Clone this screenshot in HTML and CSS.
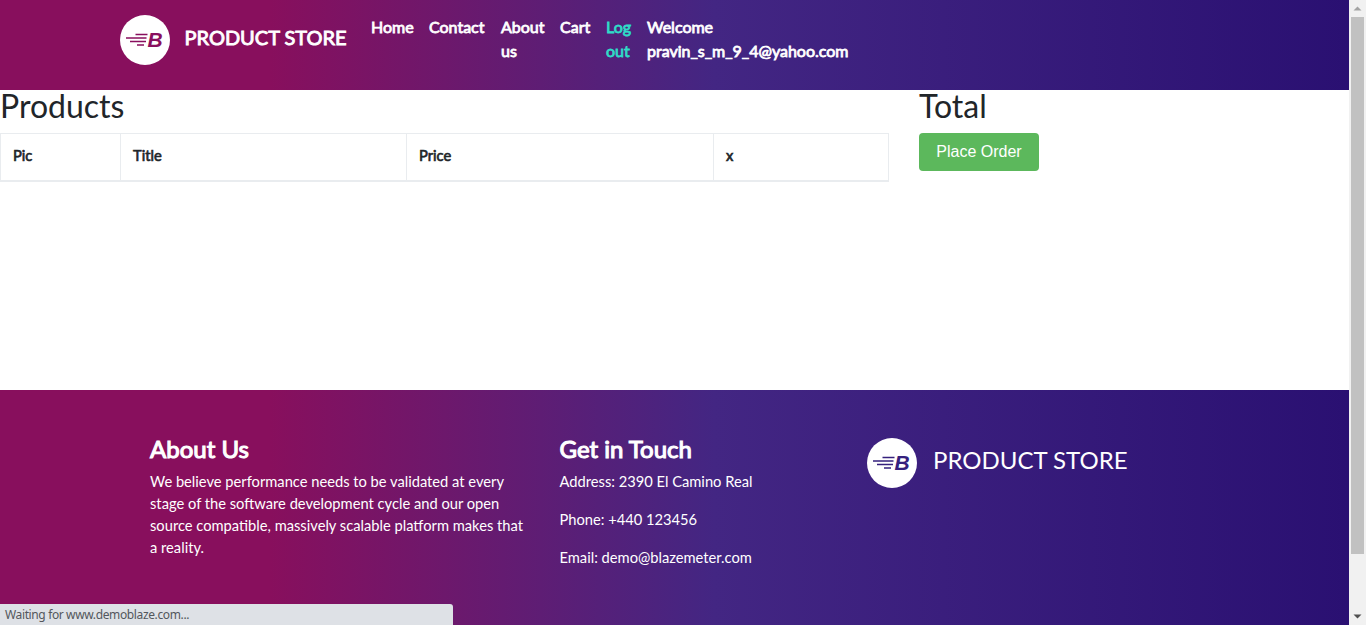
FILE: index.html
```html
<!DOCTYPE html>
<html lang="en">
<head>
<meta charset="utf-8">
<title>STORE</title>
<link rel="stylesheet" href="styles.css">
</head>
<body>
<div class="window">
  <div class="page">
    <header class="navbar">
      <a class="brand">
        <svg class="logo" viewBox="0 0 50 50"><circle cx="25" cy="25" r="25" fill="#fff"/><path class="speed" d="M15.5 19.5H27.5M6 23H26.5M10 26.5H26M17 30H24"/><text class="mark" x="27.5" y="32.3">B</text></svg>
        <span class="brand-name">PRODUCT STORE</span>
      </a>
      <nav class="nav">
        <a class="link home">Home</a>
        <a class="link contact">Contact</a>
        <a class="link about">About<br>us</a>
        <a class="link cart">Cart</a>
        <a class="link logout">Log<br>out</a>
        <a class="link user">Welcome<br>pravin_s_m_9_4@yahoo.com</a>
      </nav>
    </header>
    <main class="content">
      <section class="products">
        <h2>Products</h2>
        <table class="table">
          <thead><tr><th class="pic">Pic</th><th class="title">Title</th><th class="price">Price</th><th>x</th></tr></thead>
        </table>
      </section>
      <section class="total">
        <h2>Total</h2>
        <button class="order">Place Order</button>
      </section>
    </main>
    <footer class="footer">
      <section class="about-us">
        <h4>About Us</h4>
        <p>We believe performance needs to be validated at every<br>stage of the software development cycle and our open<br>source compatible, massively scalable platform makes that<br>a reality.</p>
      </section>
      <section class="touch">
        <h4>Get in Touch</h4>
        <p>Address: 2390 El Camino Real</p>
        <p>Phone: +440 123456</p>
        <p>Email: demo@blazemeter.com</p>
      </section>
      <section class="foot-brand">
        <svg class="logo violet" viewBox="0 0 50 50"><circle cx="25" cy="25" r="25" fill="#fff"/><path class="speed" d="M15.5 19.5H27.5M6 23H26.5M10 26.5H26M17 30H24"/><text class="mark" x="27.5" y="32.3">B</text></svg>
        <span class="foot-name">PRODUCT STORE</span>
      </section>
    </footer>
  </div>
  <div class="scrollbar">
    <svg class="arrow" viewBox="0 0 17 17"><path d="M4.5 10.5h8l-4-4z" fill="#a3a3a3"/></svg>
    <div class="thumb"></div>
    <svg class="arrow" viewBox="0 0 17 17"><path d="M4.5 6.5h8l-4 4z" fill="#505050"/></svg>
  </div>
  <div class="status">Waiting for www.demoblaze.com...</div>
</div>
</body>
</html>
```
FILE: styles.css
```css
* { box-sizing: border-box; }
body { margin: 0; font-family: Lato, sans-serif; background: #fff; color: #212529; }
h2, h4, p { margin: 0; }
.window { position: relative; display: flex; width: 1366px; height: 625px; overflow: hidden; }
.page { width: 1349px; display: flex; flex-direction: column; }
.navbar, .footer { background: linear-gradient(90deg, #880f5d 0%, #880f5d 20%, #432683 53%, #2a1072 100%); color: #fff; }
.navbar { height: 90px; padding: 15px 0 0 120px; display: flex; align-items: flex-start; }
.brand { display: flex; width: 251px; }
.logo { width: 50px; height: 50px; flex: none; color: #890f5e; }
.violet { color: #35207d; }
.speed { stroke: currentColor; stroke-width: 1.7; fill: none; }
.mark { font: italic bold 21px "Liberation Sans", sans-serif; fill: currentColor; }
.brand-name { margin-left: 14.5px; font-size: 20px; line-height: 44px; -webkit-text-stroke: 0.9px currentColor; white-space: nowrap; }
.nav { display: flex; }
.link { font-size: 16px; line-height: 24px; -webkit-text-stroke: 0.8px currentColor; white-space: nowrap; }
.home { width: 58px; }
.contact { width: 72px; }
.about { width: 59px; }
.cart { width: 46px; }
.logout { width: 41px; color: #2fdcc8; }
.content { height: 300px; display: flex; }
.products { width: 919px; }
h2 { font-size: 32px; line-height: 32px; font-weight: 400; margin-bottom: 11px; }
.table { width: 889px; border-collapse: collapse; table-layout: fixed; }
.table th { height: 47px; border: 1px solid #e9ecef; border-bottom-width: 2px; padding: 0 12px 3px; text-align: left; font-size: 14.7px; font-weight: 400; -webkit-text-stroke: 0.65px currentColor; }
.pic { width: 120px; }
.title { width: 286px; }
.price { width: 307px; }
.order { display: block; width: 120px; height: 38px; padding: 0; border: 0; border-radius: 4px; background: #5cb85c; color: #fff; font: 16px "Liberation Sans", sans-serif; }
.footer { height: 235px; padding: 46px 0 0 150px; display: flex; }
h4 { font-size: 24px; line-height: 25px; font-weight: 400; -webkit-text-stroke: 1.1px currentColor; margin-bottom: 9px; }
.footer p { font-size: 14.7px; line-height: 22px; white-space: nowrap; }
.about-us { width: 409.5px; }
.touch { width: 307.5px; }
.touch p { margin-bottom: 16px; }
.foot-brand { display: flex; padding-top: 2px; }
.foot-name { margin-left: 16px; font-size: 24px; line-height: 44px; white-space: nowrap; }
.scrollbar { width: 17px; background: #f1f1f1; display: flex; flex-direction: column; }
.arrow { width: 17px; height: 17px; flex: none; }
.thumb { width: 13px; height: 537px; margin: 0 2px auto; background: #c1c1c1; }
.status { position: absolute; left: 0; bottom: 0; width: 453px; height: 21px; padding-left: 5px; border-radius: 0 3px 0 0; background: #dee1e6; color: #53575c; font: 12px/22px "Noto Sans", sans-serif; letter-spacing: -0.37px; }
```
